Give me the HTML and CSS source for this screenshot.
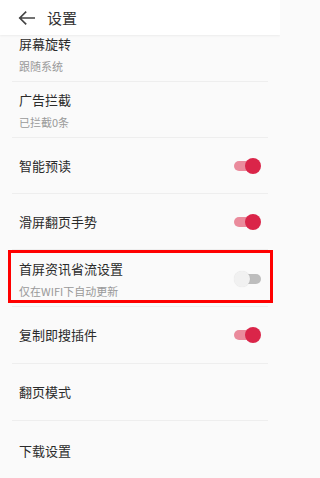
FILE: index.html
```html
<!DOCTYPE html>
<html lang="zh">
<head>
<meta charset="utf-8">
<title>设置</title>
<link rel="stylesheet" href="styles.css">
</head>
<body>
<div class="app">
  <header class="header">
    <svg class="back" width="17" height="14" viewBox="0 0 17 14" aria-hidden="true">
      <path d="M16.5 7H1.8M7.6 1.2L1.8 7l5.8 5.8" fill="none" stroke="#444" stroke-width="1.7" stroke-linecap="square"/>
    </svg>
    <span class="header-title">设置</span>
  </header>
  <div class="viewport">
    <div class="list">
      <div class="row two">
        <div class="text"><div class="title">屏幕旋转</div><div class="sub">跟随系统</div></div>
      </div>
      <div class="row two">
        <div class="text"><div class="title">广告拦截</div><div class="sub">已拦截0条</div></div>
      </div>
      <div class="row">
        <div class="title">智能预读</div>
        <span class="toggle on"><span class="track"></span><span class="knob"></span></span>
      </div>
      <div class="row">
        <div class="title">滑屏翻页手势</div>
        <span class="toggle on"><span class="track"></span><span class="knob"></span></span>
      </div>
      <div class="row two tall highlighted">
        <div class="text"><div class="title">首屏资讯省流设置</div><div class="sub">仅在WIFI下自动更新</div></div>
        <span class="toggle off"><span class="track"></span><span class="knob"></span></span>
        <span class="mark"></span>
      </div>
      <div class="row tall">
        <div class="title">复制即搜插件</div>
        <span class="toggle on"><span class="track"></span><span class="knob"></span></span>
      </div>
      <div class="row tall">
        <div class="title">翻页模式</div>
      </div>
      <div class="row tall last">
        <div class="title">下载设置</div>
      </div>
    </div>
  </div>
</div>
</body>
</html>
```
FILE: styles.css
```css
* { box-sizing: border-box; }
html, body { margin: 0; padding: 0; }
body {
  width: 280px;
  height: 478px;
  overflow: hidden;
  background: #fafafa;
  font-family: "Noto Sans CJK SC", "Noto Sans", sans-serif;
  color: #333;
}
.app {
  display: flex;
  flex-direction: column;
  height: 478px;
}
.header {
  position: relative;
  z-index: 2;
  flex: none;
  height: 35px;
  background: #fff;
  display: flex;
  align-items: center;
  padding-left: 18px;
  gap: 12px;
  box-shadow: 0 1px 2px rgba(0,0,0,0.06);
}
.back { display: block; margin-top: 1px; }
.header-title {
  font-size: 15px;
  line-height: 20px;
  color: #333;
}
.viewport {
  flex: 1;
  overflow: hidden;
}
.list {
  margin-top: -9px;
}
.row {
  position: relative;
  margin: 0 12px;
  height: 56px;
  padding: 0 7px;
  border-bottom: 1px solid #eeeeee;
  display: flex;
  align-items: center;
  justify-content: space-between;
}
.row.tall { height: 57px; }
.row.last { height: 60px; }
.row.two { align-items: flex-start; }
.row.two .text { padding-top: 9px; }
.row.highlighted .text { padding-top: 10px; }
.row.two .toggle { margin-top: 21px; }
.title {
  font-size: 13px;
  line-height: 18px;
  color: #2b2b2b;
}
.sub {
  margin-top: 5px;
  font-size: 11px;
  line-height: 16px;
  color: #999;
}
.toggle {
  position: relative;
  width: 27px;
  height: 16px;
  flex: none;
}
.track {
  position: absolute;
  top: 3px;
  width: 24px;
  height: 10px;
  border-radius: 5px;
}
.knob {
  position: absolute;
  top: 0;
  width: 16px;
  height: 16px;
  border-radius: 50%;
}
.toggle.on .track { left: 0; background: #ea8b9c; }
.toggle.on .knob { right: 0; background: #da2549; }
.toggle.off .track { right: 0; background: #bdbdbd; }
.toggle.off .knob { left: 0; background: #f1f1f1; box-shadow: 0 0 1px rgba(0,0,0,0.12); }
.mark {
  position: absolute;
  left: -4px;
  right: -5px;
  top: 0;
  height: 53px;
  border: 3px solid #ff0000;
  pointer-events: none;
}
```
